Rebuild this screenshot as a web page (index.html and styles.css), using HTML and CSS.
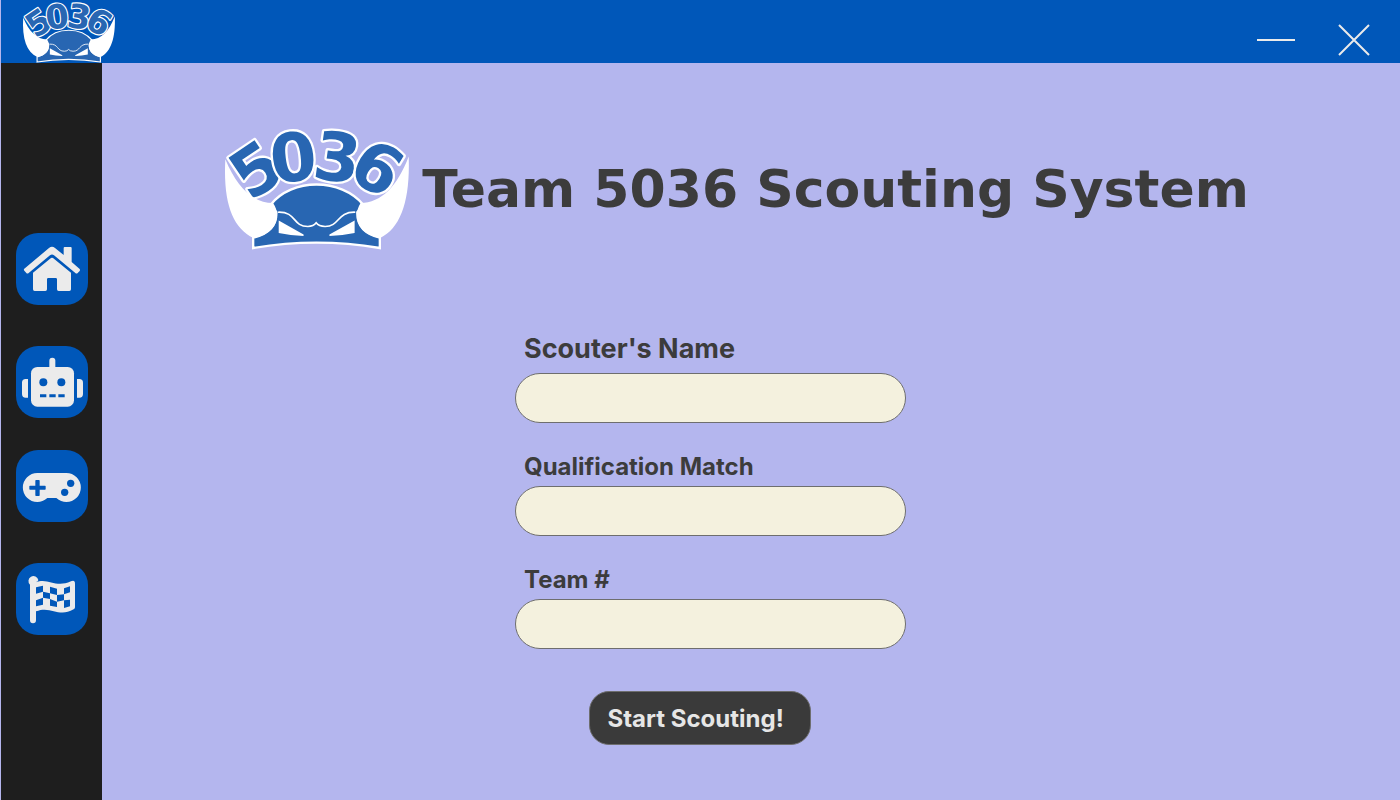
FILE: index.html
```html
<!DOCTYPE html>
<html lang="en">
<head>
<meta charset="utf-8">
<title>Team 5036 Scouting System</title>
<link rel="stylesheet" href="styles.css">
</head>
<body>
<header class="titlebar">
  <svg class="brand" viewBox="33 36 555 368" role="img" aria-label="Team 5036">
    <g id="crab">
      <g class="crab-digits" text-anchor="middle">
        <text transform="translate(126 160) rotate(-34)" y="73">5</text>
        <text transform="translate(239 123) rotate(-7)" y="73">0</text>
        <text transform="translate(372 123) rotate(8)" y="73">3</text>
        <text transform="translate(493 155) rotate(31)" y="73">6</text>
      </g>
      <path class="crab-shell" d="M170 268C235 186 382 186 451 268L432 290Q430 350 500 367V398Q308 366 118 398V367Q190 350 188 290Z"/>
      <path class="crab-white" d="M34 130C68 212 115 262 178 262C204 300 190 355 119 368C55 338 27 260 34 130ZM587 122C553 212 504 262 442 262C418 300 430 355 501 368C564 338 592 252 587 122Z"/>
      <path class="crab-brow" d="M193 290C250 288 235 333 283 333Q300 333 308 322Q316 333 335 333C380 333 370 288 426 290"/>
      <path class="crab-white" d="M195 315L270 357V362Q230 360 195 353ZM424 315L348 357V362Q388 360 424 353Z"/>
    </g>
  </svg>
  <div class="window-controls">
    <button class="window-button" type="button" aria-label="Minimize">
      <svg width="40" height="32" viewBox="0 0 40 32"><path d="M1 16H39"/></svg>
    </button>
    <button class="window-button" type="button" aria-label="Close">
      <svg width="32" height="32" viewBox="0 0 32 32"><path d="M1 1L31 31M31 1L1 31"/></svg>
    </button>
  </div>
</header>

<div class="shell">
  <nav class="sidebar" aria-label="Sections">
    <div class="nav-group">
      <button class="nav-button" type="button" aria-label="Home">
        <svg viewBox="48 39 216 216">
          <path d="M72 147L147 84Q156 77 165 84L191 105V84Q191 81 194 81H212Q215 81 215 84V126L239 147Q241 150 239 153L233 159Q230 162 226 159L162 106Q156 101 150 106L86 159Q82 162 79 159L73 152Q71 150 72 147Z"/>
          <path d="M99 158L153 114Q156 112 159 114L213 158V208Q213 213 208 213H176Q171 213 171 208V178Q171 174 167 174H145Q141 174 141 178V208Q141 213 136 213H104Q99 213 99 208Z"/>
        </svg>
      </button>
      <button class="nav-button" type="button" aria-label="Robot">
        <svg viewBox="48 378 216 216">
          <path d="M148 450V422Q148 413 157 413Q166 413 166 422V450Z"/>
          <rect x="93" y="441" width="129" height="119" rx="19"/>
          <path d="M84 477V533H77Q66 533 66 522V488Q66 477 77 477ZM231 477V533H238Q249 533 249 522V488Q249 477 238 477Z"/>
          <g class="cutout"><circle cx="130" cy="487" r="12"/><circle cx="184" cy="487" r="12"/><path d="M120 523H139V532H120ZM148 523H167V532H148ZM175 523H194V532H175Z"/></g>
        </svg>
      </button>
    </div>
    <div class="nav-group">
      <button class="nav-button" type="button" aria-label="Teleop">
        <svg viewBox="48 30 216 216">
          <path d="M112 99H199A43 43 0 0 1 199 186Q183 186 169 174H142Q128 186 112 186A43 43 0 0 1 112 99Z"/>
          <g class="cutout"><path d="M108 120H117Q119 120 119 122V137H135Q137 137 137 139V147Q137 149 135 149H119V166Q119 168 117 168H108Q106 168 106 166V149H90Q88 149 88 147V139Q88 137 90 137H106V122Q106 120 108 120Z"/><circle cx="212" cy="130" r="11"/><circle cx="194" cy="157" r="11"/></g>
        </svg>
      </button>
      <button class="nav-button" type="button" aria-label="Finish">
        <svg viewBox="48 369 216 216">
          <path d="M107 427C145 411 165 446 213 424Q225 419 225 431V502Q225 506 221 508C175 535 155 496 108 514V541Q108 550 99 550Q90 550 90 541V434A15 15 0 1 1 115 420Q115 424 107 427Z"/>
          <g class="cutout"><path d="M108 442L129 437V455L108 461ZM150 440L171 446V465L150 460ZM192 445L210 439V457L192 463ZM129 455L150 460V477L129 473ZM171 465L192 463V481L171 485ZM108 481L129 473V494L108 499ZM150 477L171 485V501L150 497ZM192 481L210 479V499L192 504Z"/></g>
        </svg>
      </button>
    </div>
  </nav>

  <main class="content">
    <div class="hero">
      <svg class="hero-logo" viewBox="33 36 555 368" role="img" aria-label="Team 5036 logo"><use href="#crab"/></svg>
      <h1 class="hero-title">Team 5036 Scouting System</h1>
    </div>
    <form class="scout-form">
      <div class="field">
        <label class="field-label field-label-large" for="scouter">Scouter's Name</label>
        <input class="field-input" id="scouter" type="text">
      </div>
      <div class="field">
        <label class="field-label" for="match">Qualification Match</label>
        <input class="field-input" id="match" type="text">
      </div>
      <div class="field">
        <label class="field-label" for="team">Team #</label>
        <input class="field-input" id="team" type="text">
      </div>
      <div class="form-actions">
        <button class="start-button" type="submit">Start Scouting!</button>
      </div>
    </form>
  </main>
</div>
</body>
</html>
```
FILE: styles.css
```css
* {
  box-sizing: border-box;
}

body {
  margin: 0;
  padding-left: 1px;
  min-height: 100vh;
  display: flex;
  flex-direction: column;
  background: #b4b6ee;
  color: #3c3c3c;
  font-family: Inter, "Open Sans", sans-serif;
}

button {
  margin: 0;
  padding: 0;
  border: 0;
  background: none;
  font: inherit;
  cursor: pointer;
}

.titlebar {
  display: flex;
  justify-content: space-between;
  height: 63px;
  padding: 2px 30px 0 22px;
  background: #0057b9;
}

.brand {
  width: 92px;
  height: 61px;
  overflow: visible;
}

.window-controls {
  display: flex;
  gap: 42px;
  padding-top: 22px;
}

.window-button {
  height: 32px;
}

.window-button svg {
  display: block;
  fill: none;
  stroke: #ebebeb;
  stroke-width: 2;
}

.shell {
  flex: 1;
  display: flex;
}

.sidebar {
  flex: none;
  display: flex;
  flex-direction: column;
  gap: 32px;
  padding: 170px 14px 32px 15px;
  background: #1e1e1e;
}

.nav-group {
  display: flex;
  flex-direction: column;
  gap: 41px;
}

.nav-button {
  width: 72px;
  height: 72px;
  border-radius: 22px;
  background: #0057b9;
}

.nav-button svg {
  display: block;
  fill: #ebebeb;
}

.nav-button .cutout {
  fill: #0057b9;
}

.crab-digits {
  font: bold 202px "DejaVu Sans", sans-serif;
  fill: #2866b2;
  stroke: #fff;
  stroke-width: 14px;
  stroke-linejoin: round;
  paint-order: stroke;
}

.crab-shell {
  fill: #2866b2;
  stroke: #fff;
  stroke-width: 7px;
}

.crab-white {
  fill: #fff;
}

.crab-brow {
  fill: none;
  stroke: #fff;
  stroke-width: 5px;
}

.content {
  flex: 1;
  padding: 65px 16px 32px;
}

.hero {
  display: flex;
  justify-content: center;
  align-items: center;
  gap: 12px;
  padding-right: 29px;
}

.hero-logo {
  flex: none;
  width: 186px;
  height: 122px;
  overflow: visible;
}

.hero-title {
  margin: 0;
  font: bold 52px/60px "DejaVu Sans", sans-serif;
  white-space: nowrap;
}

.scout-form {
  display: flex;
  flex-direction: column;
  align-items: center;
  gap: 33px;
  margin-top: 83px;
  padding-right: 81px;
}

.field {
  display: flex;
  flex-direction: column;
  gap: 8px;
  width: 391px;
  max-width: 100%;
}

.field-label {
  padding-left: 9px;
  font-size: 24px;
  font-weight: 700;
  line-height: 22px;
}

.field-label-large {
  font-size: 27px;
  line-height: 32px;
}

.field-input {
  width: 100%;
  height: 50px;
  padding: 0 24px;
  border: 1px solid #6e6e6e;
  border-radius: 25px;
  background: #f4f1de;
  color: inherit;
  font: inherit;
  font-size: 24px;
}

.form-actions {
  margin-top: 9px;
  padding-right: 22px;
}

.start-button {
  width: 222px;
  height: 54px;
  padding: 0 24px 0 18px;
  border: 1px solid #6e6e6e;
  border-radius: 20px;
  background: #3a3a3a;
  color: #e6e6e6;
  font-size: 24px;
  font-weight: 700;
  text-align: left;
  white-space: nowrap;
}
```
